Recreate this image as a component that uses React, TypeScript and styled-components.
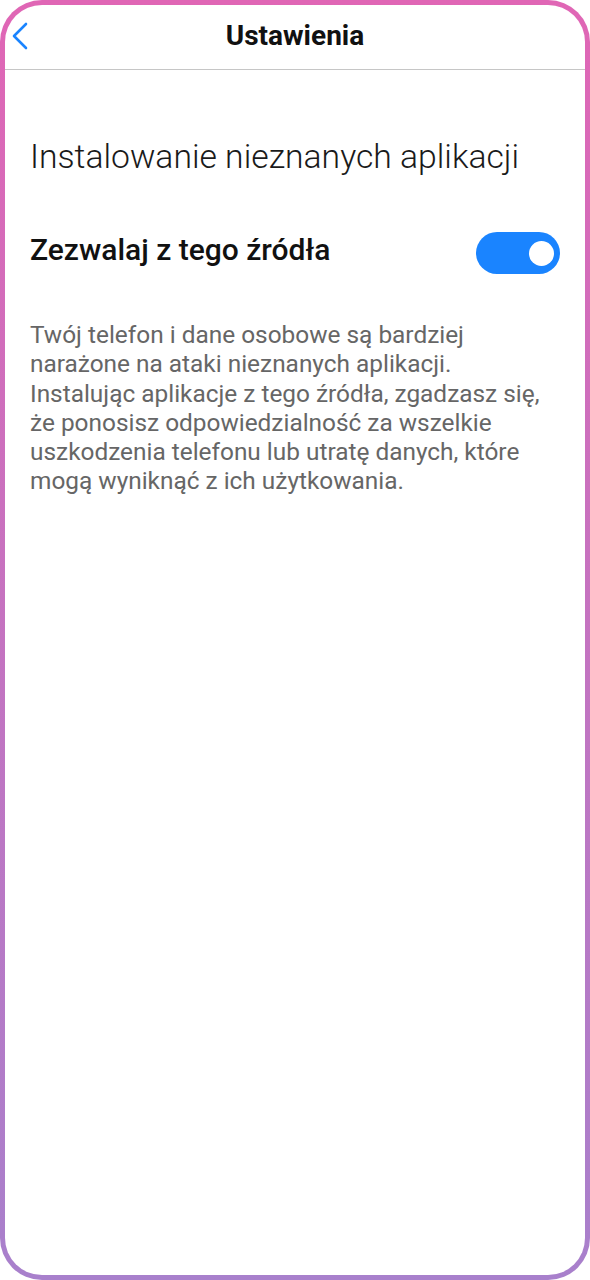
import * as React from "react";
import { styled, createGlobalStyle } from "styled-components";

const GlobalStyle = createGlobalStyle`
  html, body {
    margin: 0;
    padding: 0;
    background: #ffffff;
  }
  * {
    box-sizing: border-box;
  }
`;

function App() {
  const [allowed, setAllowed] = React.useState(true);

  return (
    <>
      <GlobalStyle />
      <Frame>
        <Header>
          <BackBtn aria-label="Wstecz">
            <svg width="18" height="28" viewBox="0 0 18 28" fill="none">
              <path
                d="M15 2 L3 14 L15 26"
                stroke="#1a84ff"
                strokeWidth="2.6"
                strokeLinecap="round"
                strokeLinejoin="round"
              />
            </svg>
          </BackBtn>
          <Title>Ustawienia</Title>
        </Header>

        <Content>
          <PageTitle>Instalowanie nieznanych aplikacji</PageTitle>

          <SettingRow>
            <SettingLabel>Zezwalaj z tego źródła</SettingLabel>
            <Toggle
              role="switch"
              aria-checked={allowed}
              $on={allowed}
              onClick={() => setAllowed(!allowed)}
            >
              <Knob $on={allowed} />
            </Toggle>
          </SettingRow>

          <Description>
            Twój telefon i dane osobowe są bardziej
            <br />
            narażone na ataki nieznanych aplikacji.
            <br />
            Instalując aplikacje z tego źródła, zgadzasz się,
            <br />
            że ponosisz odpowiedzialność za wszelkie
            <br />
            uszkodzenia telefonu lub utratę danych, które
            <br />
            mogą wyniknąć z ich użytkowania.
          </Description>
        </Content>
      </Frame>
    </>
  );
}

const Frame = styled.div`
  width: 590px;
  height: 1280px;
  border: 5px solid transparent;
  border-radius: 42px;
  background:
    linear-gradient(#ffffff, #ffffff) padding-box,
    linear-gradient(180deg, #e066b5 0%, #a880cc 100%) border-box;
  font-family: Roboto, "Noto Sans", sans-serif;
  overflow: hidden;
`;

const Header = styled.header`
  position: relative;
  height: 65px;
  display: flex;
  align-items: center;
  justify-content: center;
  border-bottom: 1px solid #c6c6c6;
`;

const BackBtn = styled.button`
  position: absolute;
  left: 6px;
  top: 17px;
  display: flex;
  align-items: center;
  background: transparent;
  border: none;
  padding: 0;
  cursor: pointer;
`;

const Title = styled.h1`
  margin: 0;
  margin-top: -4px;
  font-size: 28px;
  font-weight: 700;
  color: #111111;
`;

const Content = styled.main`
  padding: 64px 25px 0 25px;
`;

const PageTitle = styled.h2`
  margin: 0;
  font-size: 33.7px;
  font-weight: 300;
  line-height: 46px;
  color: #1a1a1a;
`;

const SettingRow = styled.div`
  display: flex;
  align-items: center;
  justify-content: space-between;
  margin-top: 52px;
`;

const SettingLabel = styled.span`
  font-size: 30px;
  font-weight: 500;
  line-height: 36px;
  color: #111111;
  margin-bottom: 6px;
`;

const Toggle = styled.button<{ $on: boolean }>`
  width: 84px;
  height: 42px;
  border: none;
  border-radius: 21px;
  padding: 0 6px;
  display: flex;
  align-items: center;
  justify-content: ${({ $on }) => ($on ? "flex-end" : "flex-start")};
  background: ${({ $on }) => ($on ? "#1a84ff" : "#d4d4d4")};
  cursor: pointer;
`;

const Knob = styled.span<{ $on: boolean }>`
  width: 25px;
  height: 25px;
  border-radius: 50%;
  background: #ffffff;
`;

const Description = styled.p`
  margin: 46px 0 0 0;
  font-size: 24.4px;
  line-height: 29.3px;
  color: #666666;
`;

export default App;
